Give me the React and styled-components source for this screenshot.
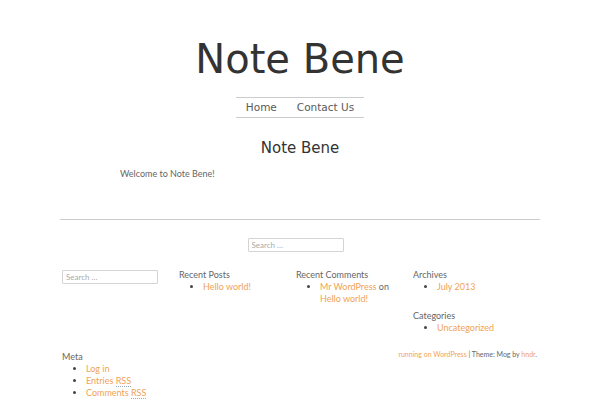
import React from "react";
import styled, { createGlobalStyle } from "styled-components";

const Global = createGlobalStyle`
  html, body { margin: 0; padding: 0; background: #fff; }
  body { font-family: Lato, "Liberation Sans", sans-serif; color: #666; }
  a { text-decoration: none; }
`;

const Page = styled.div`
  width: 480px;
  margin: 0 auto;
`;

const Header = styled.header`
  padding-top: 39px;
  text-align: center;
`;

const SiteTitle = styled.h1`
  margin: 0;
  font: normal 40px/40px "DejaVu Sans", sans-serif;
  color: #333;
`;

const Nav = styled.nav`
  display: inline-flex;
  margin-top: 18px;
  border-top: 1px solid #ccc;
  border-bottom: 1px solid #ccc;
`;

const NavLink = styled.a`
  padding: 0 10px;
  font: normal 10.5px/19px "DejaVu Sans", sans-serif;
  color: #5a5a5a;
`;

const PageTitle = styled.h2`
  margin: 20px 0 0;
  text-align: center;
  font: normal 15px/20px "DejaVu Sans", sans-serif;
  color: #333;
`;

const Body = styled.p`
  margin: 10px 0 0;
  padding-left: 60px;
  font-size: 9px;
  line-height: 12px;
  color: #666;
`;

const Rule = styled.hr`
  margin: 39px 0 0;
  border: 0;
  border-top: 1px solid #ccc;
`;

const CenterSearch = styled.div`
  margin-top: 18px;
  display: flex;
  justify-content: center;
  padding-right: 9px;
`;

const SearchInput = styled.input`
  display: block;
  box-sizing: border-box;
  width: 96px;
  height: 14px;
  margin: ${(p) => (p.$inWidget ? "1px 0 0" : "0")};
  padding: 0 3px;
  border: 1px solid #d4d4d4;
  border-radius: 1px;
  font: 8px Lato, "Liberation Sans", sans-serif;
  color: #666;
  &::placeholder { color: #aaa; }
`;

const Widgets = styled.div`
  display: grid;
  grid-template-columns: repeat(3, 117px) 1fr;
  row-gap: 17px;
  margin-top: 17px;
  padding-left: 2px;
`;

const Column = styled.div`
  display: flex;
  flex-direction: column;
  gap: 17px;
  padding-right: 8px;
`;

const Widget = styled.section``;

const WidgetTitle = styled.h3`
  margin: 0;
  font-weight: normal;
  font-size: 9px;
  line-height: 12px;
  color: #666;
`;

const List = styled.ul`
  margin: 0;
  padding-left: 24px;
  font-size: 9px;
  line-height: 12px;
  color: #666;
  li::marker { color: #444; }
`;

const Link = styled.a`
  color: #f0a356;
`;

const Abbr = styled.abbr`
  text-decoration: none;
  border-bottom: 1px dotted #9ab;
`;

const Credit = styled.div`
  grid-column: 3 / span 2;
  justify-self: end;
  align-self: start;
  margin: -3px 3px 0 0;
  font-size: 7px;
  line-height: 12px;
  color: #666;
`;

export default function App() {
  return (
    <>
      <Global />
      <Page>
        <Header>
          <SiteTitle>Note Bene</SiteTitle>
          <Nav>
            <NavLink href="#">Home</NavLink>
            <NavLink href="#">Contact Us</NavLink>
          </Nav>
        </Header>
        <main>
          <PageTitle>Note Bene</PageTitle>
          <Body>Welcome to Note Bene!</Body>
        </main>
        <Rule />
        <CenterSearch>
          <SearchInput placeholder="Search …" />
        </CenterSearch>
        <Widgets>
          <Column>
            <Widget>
              <SearchInput $inWidget placeholder="Search …" />
            </Widget>
          </Column>
          <Column>
            <Widget>
              <WidgetTitle>Recent Posts</WidgetTitle>
              <List>
                <li><Link href="#">Hello world!</Link></li>
              </List>
            </Widget>
          </Column>
          <Column>
            <Widget>
              <WidgetTitle>Recent Comments</WidgetTitle>
              <List>
                <li><Link href="#">Mr WordPress</Link> on <Link href="#">Hello world!</Link></li>
              </List>
            </Widget>
          </Column>
          <Column>
            <Widget>
              <WidgetTitle>Archives</WidgetTitle>
              <List>
                <li><Link href="#">July 2013</Link></li>
              </List>
            </Widget>
            <Widget>
              <WidgetTitle>Categories</WidgetTitle>
              <List>
                <li><Link href="#">Uncategorized</Link></li>
              </List>
            </Widget>
          </Column>
          <Column>
            <Widget>
              <WidgetTitle>Meta</WidgetTitle>
              <List>
                <li><Link href="#">Log in</Link></li>
                <li><Link href="#">Entries <Abbr title="Really Simple Syndication">RSS</Abbr></Link></li>
                <li><Link href="#">Comments <Abbr title="Really Simple Syndication">RSS</Abbr></Link></li>
              </List>
            </Widget>
          </Column>
          <Credit>
            <Link href="#">running on WordPress</Link> | Theme: Mog by <Link href="#">hndr</Link>.
          </Credit>
        </Widgets>
      </Page>
    </>
  );
}
